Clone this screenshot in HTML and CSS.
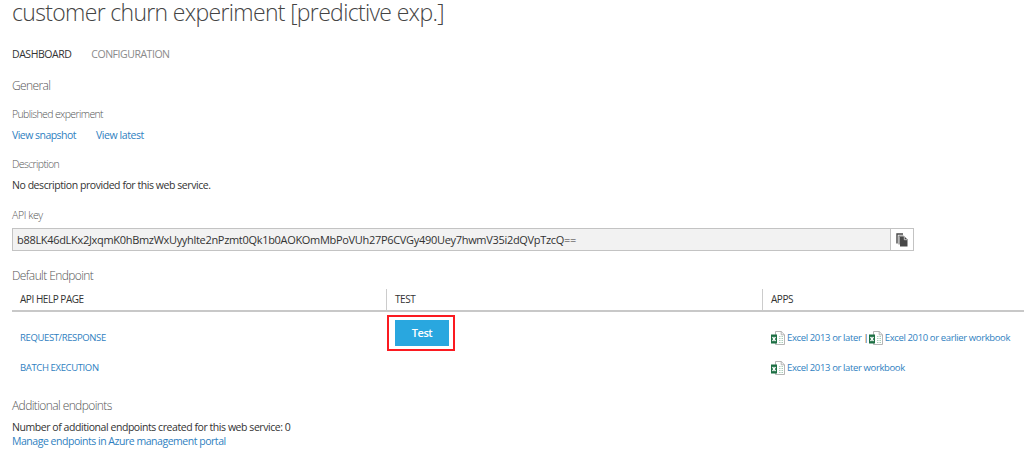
FILE: index.html
```html
<!DOCTYPE html>
<html lang="en">
<head>
<meta charset="utf-8">
<title>customer churn experiment [predictive exp.]</title>
<link rel="stylesheet" href="styles.css">
</head>
<body>
<svg class="defs" aria-hidden="true">
  <symbol id="excel" viewBox="0 0 14 14">
    <path d="M4.500.5h5.700l3.300 3.300v9.700h-9z" fill="#fff" stroke="#a3a3a3" stroke-width=".8"/>
    <path d="M10.200.5v3.300h3.300" fill="none" stroke="#a3a3a3" stroke-width=".8"/>
    <path d="M8 5.500h1.500M10.500 5.500h1.500M8 7.500h1.500M10.500 7.500h1.500M8 9.500h1.500M10.500 9.500h1.500M8 11.500h1.500M10.500 11.500h1.500" stroke="#a9cdb8" stroke-width="1"/>
    <path d="M0 3.500h6v9H0z" fill="#1d7044"/>
    <path d="M1.500 6l3 4.200M4.500 6l-3 4.200" stroke="#fff" stroke-width="1.300"/>
  </symbol>
</svg>
<main class="page">
  <h1 class="title">customer churn experiment [predictive exp.]</h1>
  <nav class="tabs">
    <span class="tab tab-active">DASHBOARD</span>
    <span class="tab tab-config">CONFIGURATION</span>
  </nav>
  <section class="general">
    <h2 class="heading h-general">General</h2>
    <h3 class="label l-published">Published experiment</h3>
    <div class="links"><a class="link snapshot">View snapshot</a><a class="link latest">View latest</a></div>
    <h3 class="label l-description">Description</h3>
    <p class="text t-description">No description provided for this web service.</p>
    <h3 class="label l-key">API key</h3>
    <div class="key">
      <span class="key-value">b88LK46dLKx2JxqmK0hBmzWxUyyhlte2nPzmt0Qk1b0AOKOmMbPoVUh27P6CVGy490Uey7hwmV35i2dQVpTzcQ==</span>
      <span class="copy"><svg width="12" height="14" viewBox="0 0 12 14"><path d="M1 10.500V1h6" fill="none" stroke="#484848" stroke-width="1.400"/><path d="M2.500 2.500h5v1H3.700v8H2.500z" fill="#777"/><path d="M4 3.500h4.500L11.500 6.500v7H4z" fill="#484848"/><path d="M8.300 4v2.700H11" fill="none" stroke="#ddd" stroke-width=".8"/></svg></span>
    </div>
  </section>
  <section>
    <h2 class="heading h-default">Default Endpoint</h2>
    <div class="grid head">
      <div class="cell">API HELP PAGE</div><div class="cell">TEST</div><div class="cell">APPS</div>
    </div>
    <div class="grid row-request">
      <div class="cell"><a class="link small">REQUEST/RESPONSE</a></div>
      <div class="cell-test"><div class="highlight"><button class="test">Test</button></div></div>
      <div class="cell apps"><svg class="excel"><use href="#excel"/></svg><a class="link small">Excel 2013 or later</a><span class="bar">|</span><svg class="excel"><use href="#excel"/></svg><a class="link small">Excel 2010 or earlier workbook</a></div>
    </div>
    <div class="grid row-batch">
      <div class="cell"><a class="link small batch">BATCH EXECUTION</a></div>
      <div></div>
      <div class="cell apps"><svg class="excel"><use href="#excel"/></svg><a class="link small">Excel 2013 or later workbook</a></div>
    </div>
  </section>
  <section>
    <h2 class="heading h-additional">Additional endpoints</h2>
    <p class="text t-number">Number of additional endpoints created for this web service: 0</p>
    <p class="text"><a class="link manage">Manage endpoints in Azure management portal</a></p>
  </section>
</main>
</body>
</html>
```
FILE: styles.css
```css
* { box-sizing: border-box; }
body { margin: 0; background: #fff; font-family: "Open Sans", "Noto Sans", sans-serif; font-size: 10.5px; line-height: 14px; color: #333; }
h1, h2, h3, p { margin: 0; font-weight: 400; white-space: nowrap; }
.defs { display: none; }
.page { padding-left: 12px; }
.title { font-size: 23px; line-height: 24px; font-weight: 300; letter-spacing: -.67px; color: #444; }
.tabs { display: flex; gap: 20px; margin-top: 23px; letter-spacing: -.46px; }
.tab { color: #8a8a8a; }
.tab-active { color: #333; }
.heading { font-size: 12px; line-height: 16px; font-weight: 300; letter-spacing: -.6px; color: #555; }
.label { font-size: 10.5px; font-weight: 300; letter-spacing: -.62px; color: #555; }
.text { letter-spacing: -.44px; }
.link { color: #2f7fc1; }
.snapshot { letter-spacing: -.53px; }
.latest { letter-spacing: -.42px; }
.manage { letter-spacing: -.47px; }
.h-general { margin-top: 17px; }
.l-published { margin-top: 13px; }
.links { display: flex; gap: 20px; margin-top: 7px; }
.l-description { margin-top: 15px; }
.t-description { margin-top: 7px; }
.l-key { margin-top: 16px; letter-spacing: -.4px; }
.key { display: flex; width: 902px; height: 23px; margin-top: 6px; border: 1px solid #c3c3c3; background: #f2f2f2; font-size: 11px; line-height: 22px; letter-spacing: -.31px; }
.key-value { flex: 1; padding-left: 4px; }
.copy { display: flex; width: 23px; align-items: center; justify-content: center; padding-right: 1px; background: #fff; border-left: 1px solid #c3c3c3; }
.h-default { margin-top: 17px; }
.grid { display: grid; grid-template-columns: 374px 376px 1fr; }
.head { margin-top: 5px; height: 23px; border-bottom: 2px solid #c8c8c8; font-size: 10px; line-height: 20px; letter-spacing: -.46px; }
.head .cell + .cell { border-left: 1px solid #ccc; }
.cell { padding-left: 8px; white-space: nowrap; }
.small { font-size: 9.5px; letter-spacing: -.37px; }
.row-request { height: 41px; line-height: 51px; }
.row-batch { height: 30px; line-height: 29px; }
.cell-test { padding: 3px 0 0 1px; }
.highlight { width: 68px; height: 36px; padding: 3px 6px; border: 2px solid #fb1a20; }
.test { display: block; width: 54px; height: 26px; padding: 0; border: 0; background: #29a7df; color: #fff; font: 600 11px/26px "Open Sans", sans-serif; letter-spacing: -.5px; }
.apps { display: flex; align-items: center; padding-left: 9px; }
.row-batch .apps { height: 29px; }
.excel { width: 14px; height: 14px; margin-right: 2px; flex: none; }
.bar { margin: 0 0 0 2px; font-size: 9.5px; }
.h-additional { margin-top: 15px; }
.t-number { margin-top: 6px; }
```
